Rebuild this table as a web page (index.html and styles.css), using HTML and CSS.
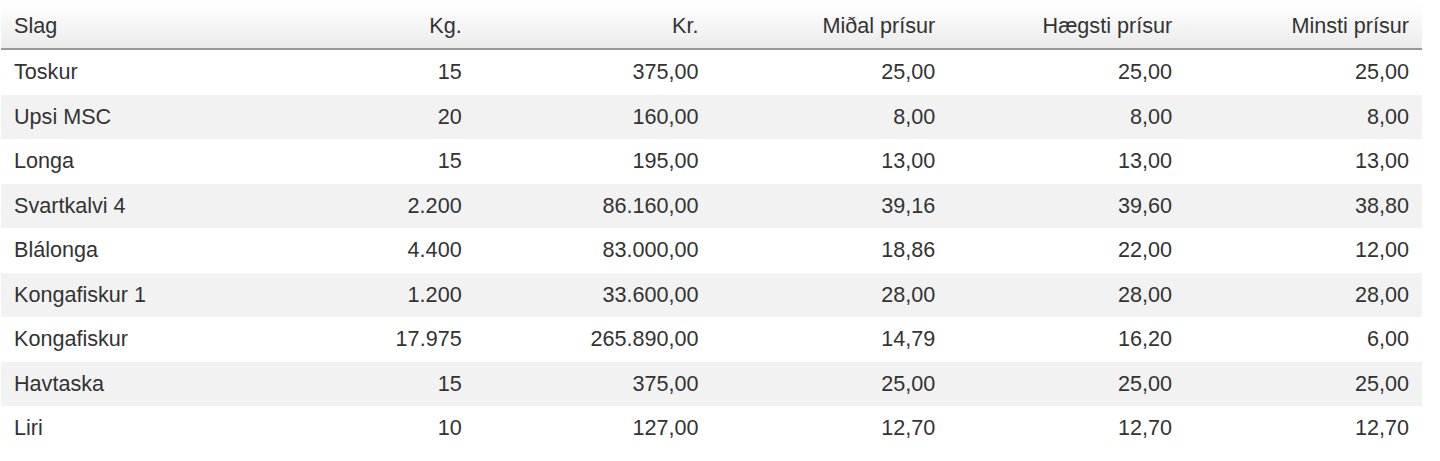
FILE: index.html
```html
<!DOCTYPE html>
<html lang="fo">
<head>
<meta charset="utf-8">
<title>Prísir</title>
<link rel="stylesheet" href="styles.css">
</head>
<body>
<table class="prices">
  <thead>
    <tr>
      <th class="name">Slag</th>
      <th>Kg.</th>
      <th>Kr.</th>
      <th>Miðal prísur</th>
      <th>Hægsti prísur</th>
      <th>Minsti prísur</th>
    </tr>
  </thead>
  <tbody>
    <tr><td class="name">Toskur</td><td>15</td><td>375,00</td><td>25,00</td><td>25,00</td><td>25,00</td></tr>
    <tr><td class="name">Upsi MSC</td><td>20</td><td>160,00</td><td>8,00</td><td>8,00</td><td>8,00</td></tr>
    <tr><td class="name">Longa</td><td>15</td><td>195,00</td><td>13,00</td><td>13,00</td><td>13,00</td></tr>
    <tr><td class="name">Svartkalvi 4</td><td>2.200</td><td>86.160,00</td><td>39,16</td><td>39,60</td><td>38,80</td></tr>
    <tr><td class="name">Blálonga</td><td>4.400</td><td>83.000,00</td><td>18,86</td><td>22,00</td><td>12,00</td></tr>
    <tr><td class="name">Kongafiskur 1</td><td>1.200</td><td>33.600,00</td><td>28,00</td><td>28,00</td><td>28,00</td></tr>
    <tr><td class="name">Kongafiskur</td><td>17.975</td><td>265.890,00</td><td>14,79</td><td>16,20</td><td>6,00</td></tr>
    <tr><td class="name">Havtaska</td><td>15</td><td>375,00</td><td>25,00</td><td>25,00</td><td>25,00</td></tr>
    <tr><td class="name">Liri</td><td>10</td><td>127,00</td><td>12,70</td><td>12,70</td><td>12,70</td></tr>
  </tbody>
</table>
</body>
</html>
```
FILE: styles.css
```css
html, body {
  background: #ffffff;
}
body {
  margin: 0;
  padding: 3px 18px 0 1px;
  font-family: "Liberation Sans", Arial, Helvetica, sans-serif;
  color: #333333;
}
.prices {
  width: 1421px;
  border-collapse: collapse;
  table-layout: fixed;
  font-size: 21.6px;
}
.prices th,
.prices td {
  padding: 0 13px;
  text-align: right;
  vertical-align: middle;
  font-weight: normal;
  white-space: nowrap;
}
.prices th {
  height: 45px;
  background: linear-gradient(to bottom, #ffffff 0%, #f6f6f6 45%, #ebebeb 100%);
  border-bottom: 2px solid #9a9a9a;
  color: #333333;
}
.prices td {
  height: 44.5px;
}
.prices .name {
  text-align: left;
}
.prices tbody tr:nth-child(even) td {
  background: #f2f2f2;
}
```
